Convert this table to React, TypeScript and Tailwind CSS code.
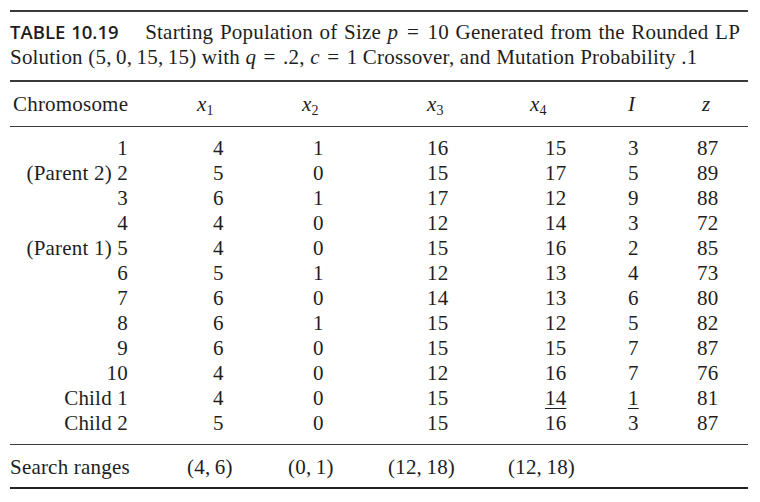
import React from "react";

const rows: { c: string; v: (string | JSX.Element)[] }[] = [
  { c: "1", v: ["4", "1", "16", "15", "3", "87"] },
  { c: "(Parent 2) 2", v: ["5", "0", "15", "17", "5", "89"] },
  { c: "3", v: ["6", "1", "17", "12", "9", "88"] },
  { c: "4", v: ["4", "0", "12", "14", "3", "72"] },
  { c: "(Parent 1) 5", v: ["4", "0", "15", "16", "2", "85"] },
  { c: "6", v: ["5", "1", "12", "13", "4", "73"] },
  { c: "7", v: ["6", "0", "14", "13", "6", "80"] },
  { c: "8", v: ["6", "1", "15", "12", "5", "82"] },
  { c: "9", v: ["6", "0", "15", "15", "7", "87"] },
  { c: "10", v: ["4", "0", "12", "16", "7", "76"] },
  {
    c: "Child 1",
    v: [
      "4",
      "0",
      "15",
      <span key="a" className="underline underline-offset-[3px] decoration-1">14</span>,
      <span key="b" className="underline underline-offset-[3px] decoration-1">1</span>,
      "81",
    ],
  },
  { c: "Child 2", v: ["5", "0", "15", "16", "3", "87"] },
];

const dataPad = ["pl-[33px]", "pl-[33px]", "pl-[47px]", "pl-[45px]", "pl-[28px]", "pl-[17px]"];

const serif = "font-['Liberation_Serif','Times_New_Roman',serif]";
const cols = "grid grid-cols-[170px_100px_100px_120px_100px_80px_68px]";

function Eq() {
  return <span className="mx-[2px]">=</span>;
}

export default function App() {
  return (
    <div className={`w-[760px] h-[502px] bg-white text-[#1e1e1e] ${serif} text-[21px] leading-[25px] tracking-[0.2px] pl-[10px] pr-[12px] pt-[10px]`}>
      <div className="border-t-[2px] border-[#3a3a3a]" />
      <div className="pt-[7px] pb-[10px] whitespace-nowrap">
        <div className="w-[730px] text-justify [text-align-last:justify] whitespace-normal">
          <span className="font-['Open_Sans',sans-serif] font-semibold text-[18.5px] tracking-normal mr-[20px]">TABLE 10.19</span>{" "}
          Starting Population of Size <i>p</i> <Eq /> 10 Generated from the Rounded LP
        </div>
        <div>
          Solution (5,{"\u2009"}0,{"\u2009"}15,{"\u2009"}15) with <i>q</i> <Eq /> .2, <i>c</i> <Eq /> 1 Crossover, and Mutation Probability .1
        </div>
      </div>
      <div className="border-t-[2px] border-[#3a3a3a]" />
      <div className={`${cols} pt-[10px] pb-[9px]`}>
        <div className="pl-[3px]">Chromosome</div>
        <div className="pl-[17px]"><i>x</i><sub className="text-[14px]">1</sub></div>
        <div className="pl-[22px]"><i>x</i><sub className="text-[14px]">2</sub></div>
        <div className="pl-[47px]"><i>x</i><sub className="text-[14px]">3</sub></div>
        <div className="pl-[30px]"><i>x</i><sub className="text-[14px]">4</sub></div>
        <div className="pl-[28px]"><i>I</i></div>
        <div className="pl-[22px]"><i>z</i></div>
      </div>
      <div className="border-t-[1.5px] border-[#3a3a3a]" />
      <div className="pt-[9px] pb-[8px]">
        {rows.map((r, i) => (
          <div key={i} className={`${cols} h-[25px]`}>
            <div className="text-right pr-[52px] whitespace-nowrap">{r.c}</div>
            {r.v.map((v, j) => (
              <div key={j} className={dataPad[j]}>{v}</div>
            ))}
          </div>
        ))}
      </div>
      <div className="border-t-[1.5px] border-[#3a3a3a]" />
      <div className={`${cols} pt-[10px] pb-[7px] whitespace-nowrap`}>
        <div>Search ranges</div>
        <div className="pl-[7px]">(4,{"\u2009"}6)</div>
        <div className="pl-[8px]">(0,{"\u2009"}1)</div>
        <div className="pl-[8px]">(12,{"\u2009"}18)</div>
        <div className="pl-[8px]">(12,{"\u2009"}18)</div>
        <div />
        <div />
      </div>
      <div className="border-t-[2.5px] border-[#222]" />
    </div>
  );
}
